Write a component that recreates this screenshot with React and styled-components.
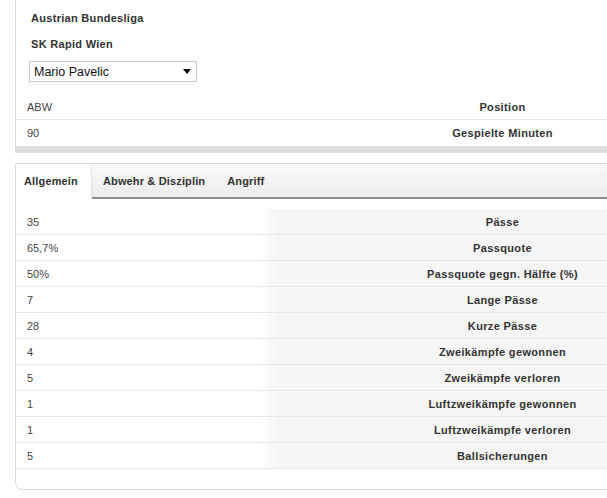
import React from "react";
import styled, { createGlobalStyle } from "styled-components";

const stats = [
  ["35", "Pässe"],
  ["65,7%", "Passquote"],
  ["50%", "Passquote gegn. Hälfte (%)"],
  ["7", "Lange Pässe"],
  ["28", "Kurze Pässe"],
  ["4", "Zweikämpfe gewonnen"],
  ["5", "Zweikämpfe verloren"],
  ["1", "Luftzweikämpfe gewonnen"],
  ["1", "Luftzweikämpfe verloren"],
  ["5", "Ballsicherungen"],
];

const tabs = ["Allgemein", "Abwehr & Disziplin", "Angriff"];

export default function App() {
  return (
    <Page>
      <GlobalStyle />
      <Top>
        <Heading>Austrian Bundesliga</Heading>
        <Heading>SK Rapid Wien</Heading>
        <SelectBox>
          <span>Mario Pavelic</span>
          <svg width="8" height="5" viewBox="0 0 8 5">
            <path d="M0 0 L8 0 L4 5 Z" fill="#000" />
          </svg>
        </SelectBox>
        <InfoTable>
          <Row>
            <Value>ABW</Value>
            <Label>Position</Label>
          </Row>
          <Row $noLine>
            <Value>90</Value>
            <Label>Gespielte Minuten</Label>
          </Row>
        </InfoTable>
        <Band />
      </Top>
      <StatsPanel>
        <TabBar>
          {tabs.map((t, i) => (
            <Tab key={t} $active={i === 0}>
              {t}
            </Tab>
          ))}
          <TabFill />
        </TabBar>
        <StatsTable>
          {stats.map(([v, l], i) => (
            <Row key={i}>
              <Value>{v}</Value>
              <Label $shaded>{l}</Label>
            </Row>
          ))}
        </StatsTable>
      </StatsPanel>
    </Page>
  );
}

const GlobalStyle = createGlobalStyle`
  body {
    margin: 0;
    background: #fff;
    font-family: "Liberation Sans", Arial, sans-serif;
    overflow: hidden;
  }
`;

const Page = styled.div`
  width: 731px;
  margin-left: 15px;
`;

const Top = styled.div`
  border-left: 1px solid #dcdcdc;
  padding-top: 11px;
`;

const Heading = styled.div`
  font-size: 11px;
  font-weight: bold;
  letter-spacing: 0.3px;
  color: #333;
  line-height: 14px;
  padding-left: 15px;
  margin-bottom: 12px;
`;

const SelectBox = styled.div`
  margin-left: 13px;
  margin-top: -2px;
  width: 157px;
  height: 19px;
  border: 1px solid #c8c8c8;
  display: flex;
  align-items: center;
  justify-content: space-between;
  padding: 0 5px 0 4px;
  font-size: 12.5px;
  color: #111;
  background: #fff;
`;

const InfoTable = styled.div`
  margin-top: 12px;
`;

const Row = styled.div`
  display: flex;
  height: 26px;
  align-items: stretch;
  border-bottom: ${(p) => (p.$noLine ? "none" : "1px solid #e8e8e8")};
  box-sizing: border-box;
`;

const Value = styled.div`
  box-sizing: border-box;
  width: 243px;
  padding-left: 11px;
  display: flex;
  align-items: center;
  font-size: 11px;
  color: #444;
`;

const Label = styled.div`
  flex: 1;
  display: flex;
  align-items: center;
  justify-content: center;
  font-size: 11px;
  font-weight: bold;
  letter-spacing: 0.35px;
  color: #333;
  background: ${(p) =>
    p.$shaded ? "linear-gradient(to right, #fff, #f6f6f6 20px, #f6f6f6)" : "transparent"};
`;

const Band = styled.div`
  height: 7px;
  background: #dedede;
`;

const StatsPanel = styled.div`
  margin-top: 10px;
  border-top: 1px solid #dcdcdc;
  border-left: 1px solid #dcdcdc;
  border-bottom: 1px solid #dcdcdc;
  border-bottom-left-radius: 7px;
  padding-bottom: 20px;
`;

const TabBar = styled.div`
  display: flex;
  height: 35px;
`;

const Tab = styled.div`
  display: flex;
  align-items: center;
  padding: 0 11px;
  font-size: 11px;
  font-weight: bold;
  letter-spacing: 0.15px;
  color: #333;
  background: ${(p) => (p.$active ? "#fff" : "linear-gradient(#fafafa, #ececec)")};
  border-right: ${(p) => (p.$active ? "1px solid #e4e4e4" : "none")};
  border-bottom: 2px solid ${(p) => (p.$active ? "#fff" : "#8a8a8a")};
  &:first-child {
    padding-left: 8px;
    padding-right: 13px;
  }
`;

const TabFill = styled.div`
  flex: 1;
  background: linear-gradient(#fafafa, #ececec);
  border-bottom: 2px solid #8a8a8a;
`;

const StatsTable = styled.div`
  margin-top: 10px;
`;
